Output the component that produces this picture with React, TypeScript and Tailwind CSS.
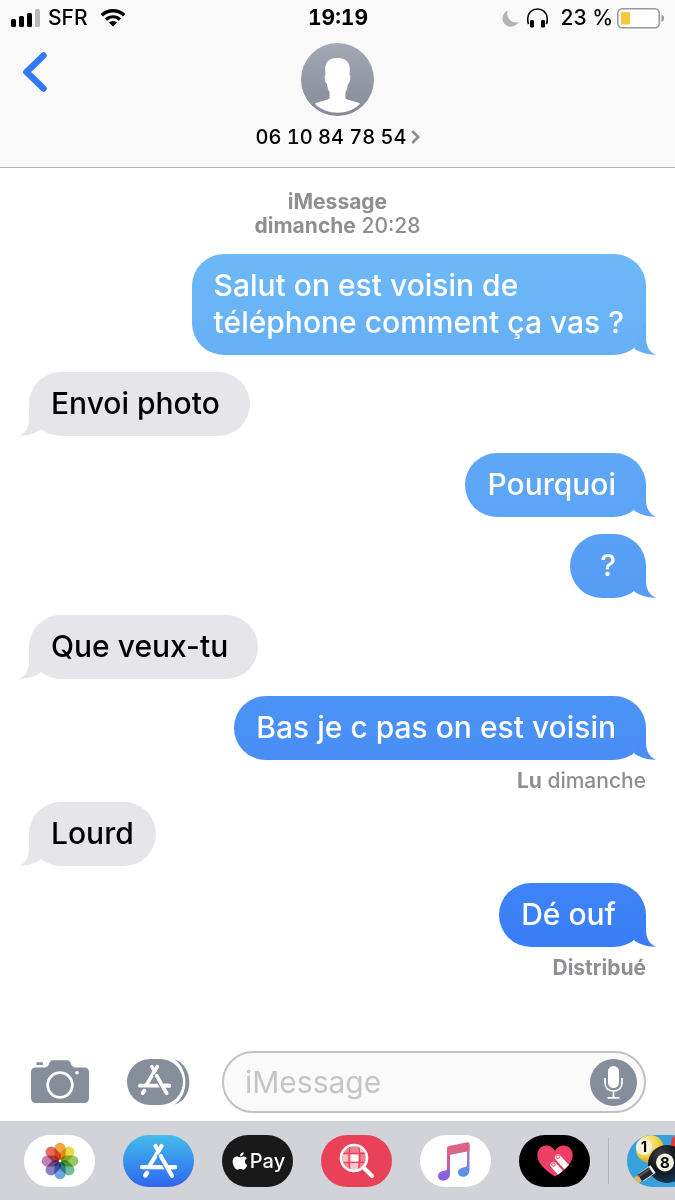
import type { ReactNode } from "react";
import { FaApple } from "react-icons/fa";

type Message = {
  text: string;
  mine: boolean;
  fill: string;
  tail: string;
  status?: ReactNode;
};

const messages: Message[] = [
  {
    text: "Salut on est voisin de\ntéléphone comment ça vas ?",
    mine: true,
    fill: "bg-linear-to-b from-[#6eb9f7] to-[#65aff6] pr-[22px]",
    tail: "text-[#65aff6]"
  },
  { text: "Envoi photo", mine: false, fill: "bg-[#e5e5ea] pr-[30px]", tail: "text-[#e5e5ea]" },
  { text: "Pourquoi", mine: true, fill: "bg-linear-to-b from-[#5fa8f6] to-[#5ba3f6] pr-[30px]", tail: "text-[#5ba3f6]" },
  { text: "?", mine: true, fill: "bg-linear-to-b from-[#59a1f6] to-[#559cf6] pr-[30px]", tail: "text-[#559cf6]" },
  { text: "Que veux-tu", mine: false, fill: "bg-[#e5e5ea] pr-[30px]", tail: "text-[#e5e5ea]" },
  {
    text: "Bas je c pas on est voisin",
    mine: true,
    fill: "bg-linear-to-b from-[#4c93f6] to-[#488ef6] pr-[30px]",
    tail: "text-[#488ef6]",
    status: (
      <>
        <span className="font-bold">Lu</span> dimanche
      </>
    )
  },
  { text: "Lourd", mine: false, fill: "bg-[#e5e5ea] pr-[22px]", tail: "text-[#e5e5ea]" },
  {
    text: "Dé ouf",
    mine: true,
    fill: "bg-linear-to-b from-[#3e84f7] to-[#397df7] pr-[30px]",
    tail: "text-[#397df7]",
    status: <span className="font-bold">Distribué</span>
  }
];

export default function App() {
  return (
    <div className="flex min-h-screen flex-col overflow-x-hidden bg-white font-[Inter,'Liberation_Sans',sans-serif] text-black">
      <header className="border-b border-[#b2b2b2] bg-[#f9f9f9]">
        <StatusBar />
        <ContactBar />
      </header>
      <main className="flex-1 px-[29px] pt-[22px]">
        <p className="mb-4 text-center text-[21px] leading-6 font-medium text-[#8e8e93]">
          <span className="font-bold">iMessage</span>
          <br />
          <span className="font-bold">dimanche</span> 20:28
        </p>
        <ul>
          {messages.map((message) => (
            <Bubble key={message.text} message={message} />
          ))}
        </ul>
      </main>
      <Composer />
      <AppDrawer />
    </div>
  );
}

function StatusBar() {
  return (
    <div className="grid h-9 grid-cols-[1fr_auto_1fr] items-center pr-[10px] pl-[11px] text-[21px] font-medium">
      <div className="flex items-center gap-2">
        <svg className="h-[18px] w-[29px]" viewBox="0 0 29 18" aria-label="Signal">
          <rect x="0" y="10" width="5" height="8" rx="1.5" />
          <rect x="8" y="7" width="5" height="11" rx="1.5" />
          <rect x="16" y="4" width="5" height="14" rx="1.5" />
          <rect x="24" y="0" width="5" height="18" rx="1.5" fill="#b9b9b9" />
        </svg>
        <span>SFR</span>
        <svg className="ml-1 h-[18px] w-[26px]" viewBox="0 0 26 18" fill="none" stroke="#000" aria-label="Wi-Fi">
          <path d="M1.8 6.3A16 16 0 0 1 24.2 6.3" strokeWidth="3.4" />
          <path d="M6 10.6A10 10 0 0 1 20 10.6" strokeWidth="3.2" />
          <path d="M8.9 13.6A6 6 0 0 1 17.1 13.6L13 17.6Z" fill="#000" stroke="none" />
        </svg>
      </div>
      <span className="font-bold tabular-nums">19:19</span>
      <div className="flex items-center justify-end gap-2">
        <svg className="h-[17px] w-[17px]" viewBox="0 0 17 17" aria-label="Ne pas déranger">
          <path d="M6 0.4A8.4 8.4 0 1 0 16.4 12A8.6 8.6 0 0 1 6 0.4Z" fill="#b3b3b3" />
        </svg>
        <svg className="mr-1 h-5 w-[21px]" viewBox="0 0 21 20" aria-label="Casque">
          <path d="M1.6 16C0.4 13.8 0.8 11 0.8 10A9.7 9 0 0 1 20.2 10C20.2 11 20.6 13.8 19.4 16" fill="none" stroke="#000" strokeWidth="1.6" />
          <rect x="3" y="12" width="4" height="7.5" rx="1.2" />
          <rect x="14" y="12" width="4" height="7.5" rx="1.2" />
        </svg>
        <span>23 %</span>
        <svg className="-ml-1 h-[22px] w-12" viewBox="0 0 48 22" aria-label="Batterie">
          <rect x="0.8" y="1.8" width="41.5" height="19" rx="4.5" fill="#fff" stroke="#989898" strokeWidth="1.6" />
          <rect x="4" y="5" width="9" height="12.5" rx="1" fill="#f5c93c" />
          <path d="M44.5 7.5C48 9 48 13.5 44.5 15Z" fill="#989898" />
        </svg>
      </div>
    </div>
  );
}

function ContactBar() {
  return (
    <div className="grid grid-cols-[1fr_auto_1fr] items-start pt-[7px] pb-4">
      <button type="button" aria-label="Retour" className="justify-self-start pt-2 pl-[22px]">
        <svg className="h-[42px] w-[27px]" viewBox="0 0 27 42" fill="none" stroke="#3578f6" strokeWidth="6.6" strokeLinecap="round" strokeLinejoin="round">
          <path d="M21.5 4.5L4.5 21L21.5 37.5" />
        </svg>
      </button>
      <button type="button" className="flex flex-col items-center">
        <svg className="size-[73px]" viewBox="0 0 73 73" aria-hidden="true">
          <defs>
            <linearGradient id="avatar" x1="0" y1="0" x2="0" y2="1">
              <stop offset="0" stopColor="#a3a8b4" />
              <stop offset="1" stopColor="#868a96" />
            </linearGradient>
          </defs>
          <circle cx="36.5" cy="36.5" r="36.5" fill="url(#avatar)" />
          <path
            d="M36.5 15C28 15 23.6 19.5 24.2 27.5L24.6 32C23.4 32 23.4 34 23.9 36.5C24.3 39 25 40.6 26 40.8C26.4 44.5 27 47 28.6 49.3V55.5C25 58 18 58 13.8 60.8C20 67 28 69.8 36.5 69.8S53 67 59.2 60.8C55 58 48 58 44.4 55.5V49.3C46 47 46.6 44.5 47 40.8C48 40.6 48.7 39 49.1 36.5C49.6 34 49.6 32 48.4 32L48.8 27.5C49.4 19.5 45 15 36.5 15Z"
            fill="#fff"
          />
        </svg>
        <span className="mt-[7px] flex items-center gap-1 text-xl leading-7 font-medium tabular-nums">
          06 10 84 78 54
          <svg className="h-[14px] w-[9px]" viewBox="0 0 9 14" fill="none" stroke="#8e8e93" strokeWidth="2.6">
            <path d="M1.2 1L7.2 7L1.2 13" />
          </svg>
        </span>
      </button>
    </div>
  );
}

function Bubble({ message }: { message: Message }) {
  const { text, mine, fill, tail, status } = message;
  return (
    <li className={`flex flex-col ${mine ? "items-end" : "items-start"} ${status ? "" : "mb-[17px]"}`}>
      <div
        className={`relative flex min-w-[76px] rounded-[32px] pt-[13px] pb-[14px] pl-[22px] ${fill} ${mine ? "justify-end text-white" : "text-black"}`}
      >
        <svg
          className={`absolute bottom-0 h-8 w-6 ${tail} ${mine ? "-right-[10px]" : "-left-[10px] -scale-x-100"}`}
          viewBox="0 0 24 32"
          fill="currentColor"
          aria-hidden="true"
        >
          <path d="M14 0V14C14 23 17 29 24 31.6C16 32 8 29.5 2 25.2L6 18L12 0Z" />
        </svg>
        <p className="relative text-[30px] leading-[37px] font-medium whitespace-pre-line">{text}</p>
      </div>
      {status && <p className="text-[21px] leading-[42px] font-medium text-[#8e8e93]">{status}</p>}
    </li>
  );
}

function Composer() {
  return (
    <form className="flex items-center gap-7 pt-4 pr-[29px] pb-2 pl-6">
      <button type="button" aria-label="Appareil photo" className="flex w-[71px] shrink-0 justify-center">
        <svg className="h-11 w-[58px]" viewBox="0 0 58 44" fill="#868e9b">
          <rect x="5.5" y="2.3" width="6.5" height="2.8" rx="0.6" />
          <path d="M5 7.5H13C17 7.5 17.5 5 18.3 3C19.2 0.7 20.5 0.2 22.5 0.2H35.5C37.5 0.2 38.8 0.7 39.7 3C40.5 5 41 7.5 45 7.5H53Q58 7.5 58 12.5V38Q58 43 53 43H5Q0 43 0 38V12.5Q0 7.5 5 7.5Z" />
          <circle cx="29" cy="25" r="12.3" fill="none" stroke="#fff" strokeWidth="2.8" />
          <circle cx="46" cy="12.7" r="1.8" fill="#fff" />
        </svg>
      </button>
      <button type="button" aria-label="Applications" className="flex w-[71px] shrink-0 justify-center">
        <svg className="h-12 w-[63px]" viewBox="0 0 63 48">
          <rect x="0" y="1" width="56" height="46" rx="23" fill="#868e9b" />
          <path d="M47.5 1.5C67 7 67.5 41 47.5 46.5C62 37 62 11 47.5 1.5Z" fill="#868e9b" />
          <g transform="translate(-4 -1) scale(0.89)">
            <StoreGlyph gap="#868e9b" />
          </g>
        </svg>
      </button>
      <div className="flex min-w-0 flex-1 items-center rounded-full border-2 border-[#c0c0c5] bg-[#fafafa] py-[5px] pr-[7px] pl-[21px]">
        <input
          type="text"
          aria-label="iMessage"
          placeholder="iMessage"
          className="min-w-0 flex-1 bg-transparent text-[30px] leading-[48px] outline-none placeholder:text-[#c5c5c9]"
        />
        <button type="button" aria-label="Dicter" className="shrink-0">
          <svg className="size-[47px]" viewBox="0 0 47 47">
            <circle cx="23.5" cy="23.5" r="23.5" fill="#868e9b" />
            <rect x="18" y="7" width="11" height="22" rx="5.5" fill="#fff" />
            <path d="M15 19V23.5C15 29 18.5 32 23.5 32S32 29 32 23.5V19M23.5 32V38.5M17.5 38.8H29.5" fill="none" stroke="#fff" strokeWidth="1.7" />
          </svg>
        </button>
      </div>
    </form>
  );
}

// The three crossed sticks of the store logo, on a 71x52 area
function StoreGlyph({ gap }: { gap: string }) {
  return (
    <g fill="none" stroke="#fff" strokeWidth="4.2" strokeLinecap="round">
      <path d="M38.5 11L26.5 31" />
      <path d="M19 32.2H52" />
      <path d="M24 38L22.3 40.3" strokeWidth="4.6" />
      <path d="M36.6 19L48.8 41" stroke={gap} strokeWidth="6.5" strokeLinecap="butt" />
      <path d="M32.5 11L35.5 16M37.8 21L49 40.8M45 32.2H52" />
    </g>
  );
}

function AppDrawer() {
  return (
    <nav aria-label="Apps iMessage" className="flex h-[79px] items-center gap-7 overflow-hidden bg-[#d1d3d8] pl-6">
      <DrawerButton label="Photos" className="bg-white">
        <PhotosIcon />
      </DrawerButton>
      <DrawerButton label="Store" className="bg-linear-to-b from-[#48bbea] to-[#3264ee]">
        <svg className="h-[52px] w-[71px]" viewBox="0 0 71 52">
          <StoreGlyph gap="#3b88ed" />
        </svg>
      </DrawerButton>
      <DrawerButton label="Apple Pay" className="bg-[#191919] text-xl font-medium text-white">
        <FaApple className="size-5" />
        <span>Pay</span>
      </DrawerButton>
      <DrawerButton label="Images" className="bg-[#e94158]">
        <SearchIcon />
      </DrawerButton>
      <DrawerButton label="Musique" className="bg-white">
        <MusicIcon />
      </DrawerButton>
      <DrawerButton label="Digital Touch" className="bg-black">
        <TouchIcon />
      </DrawerButton>
      <div className="-mx-[10px] h-[46px] w-px shrink-0 bg-[#b3b5ba]" />
      <DrawerButton label="8 Ball Pool" className="bg-[#35a1dd]">
        <PoolIcon />
      </DrawerButton>
    </nav>
  );
}

function DrawerButton({ label, className, children }: { label: string; className: string; children: ReactNode }) {
  return (
    <button
      type="button"
      aria-label={label}
      className={`flex h-[52px] w-[71px] shrink-0 items-center justify-center overflow-hidden rounded-full ${className}`}
    >
      {children}
    </button>
  );
}

function PhotosIcon() {
  const petals = ["#f29a2e", "#e6d532", "#8cc152", "#62b58a", "#5b9be0", "#7d72b8", "#bd6fae", "#e65a4d"];
  return (
    <svg className="size-[38px]" viewBox="-19 -19 38 38">
      {petals.map((color, index) => (
        <rect
          key={color}
          x="-5.6"
          y="-18.2"
          width="11.2"
          height="17.4"
          rx="5.6"
          fill={color}
          opacity="0.9"
          transform={`rotate(${index * 45})`}
          className="mix-blend-multiply"
        />
      ))}
      <circle r="1.2" fill="#fff" />
    </svg>
  );
}

function SearchIcon() {
  return (
    <svg className="size-9" viewBox="0 0 36 36">
      <circle cx="15" cy="15" r="12" fill="#f1818e" />
      <path d="M11 10.5H19.5V19H11ZM4 11H10V19H4ZM11 20H19V27H11ZM20.5 4.5L25 9H20.5Z" fill="#f9c5ca" />
      <path d="M12.5 11.5H19V18.5H12.5Z" fill="#fff" />
      <path d="M3 10.5H27M3 19.3H27M11 3C9.5 11 9.5 19 11 27M19.8 3C21.3 11 21.3 19 19.8 27" stroke="#e94158" strokeWidth="1.3" fill="none" />
      <circle cx="15" cy="15" r="13" stroke="#fff" strokeWidth="2.6" fill="none" />
      <path d="M24.5 24.5L33 33" stroke="#fff" strokeWidth="4" strokeLinecap="round" />
    </svg>
  );
}

function MusicIcon() {
  return (
    <svg className="h-10 w-9" viewBox="2 0 36 40">
      <defs>
        <linearGradient id="stemLeft" x1="0" y1="0" x2="0" y2="1">
          <stop offset="0" stopColor="#ee5367" />
          <stop offset="0.6" stopColor="#b163c4" />
          <stop offset="1" stopColor="#765df5" />
        </linearGradient>
        <linearGradient id="stemRight" x1="0" y1="0" x2="0" y2="1">
          <stop offset="0" stopColor="#d7698f" />
          <stop offset="0.5" stopColor="#8b82d8" />
          <stop offset="1" stopColor="#4b93ee" />
        </linearGradient>
      </defs>
      <path d="M11 7.5H14V33C14 37 11 39.5 7.5 39.5C4 39.5 2 37.5 2 35C2 32 4 30.5 8 29.8C10.3 29.4 11 29 11 27Z" fill="url(#stemLeft)" />
      <path d="M31 3.5H33.5V29C33.5 33 30.5 35.8 27.5 35.8C24 35.8 22 33.8 22 31.3C22 28.3 24 26.8 28 26.2C30.3 25.8 31 25.4 31 23.5Z" fill="url(#stemRight)" />
      <path d="M11 7.5C11 6 11.5 5.3 13 5L31.5 1.3C33 1 33.5 1.5 33.5 3V10L11 14.5Z" fill="#dc6484" />
    </svg>
  );
}

function TouchIcon() {
  return (
    <svg className="h-8 w-9" viewBox="0 0 36 32">
      <defs>
        <clipPath id="heart">
          <path d="M18 31.5C11 27.5 0.3 19 0.3 10.3C0.3 4.5 4.3 0.5 9.3 0.5C13.5 0.5 16.7 3 18 6C19.3 3 22.5 0.5 26.7 0.5C31.7 0.5 35.7 4.5 35.7 10.3C35.7 19 25 27.5 18 31.5Z" />
        </clipPath>
      </defs>
      <g clipPath="url(#heart)">
        <rect width="36" height="32" fill="#ec3e66" />
        <g stroke="#fff" strokeWidth="6.2" strokeLinecap="round">
          <path d="M21 12.5L34 27" />
          <path d="M16.5 20L27 32" />
        </g>
        <g fill="#fff" stroke="#ef7d8e" strokeWidth="1.4">
          <circle cx="21" cy="11.8" r="1.7" />
          <circle cx="16.5" cy="19.5" r="1.7" />
        </g>
      </g>
    </svg>
  );
}

function PoolIcon() {
  return (
    <svg className="h-[52px] w-[71px]" viewBox="0 0 71 52">
      <defs>
        <radialGradient id="yellowBall" cx="0.35" cy="0.3" r="0.8">
          <stop offset="0" stopColor="#fff3b0" />
          <stop offset="0.6" stopColor="#f0cf42" />
          <stop offset="1" stopColor="#b18b20" />
        </radialGradient>
        <radialGradient id="blackBall" cx="0.35" cy="0.25" r="0.8">
          <stop offset="0" stopColor="#3d4147" />
          <stop offset="0.5" stopColor="#101216" />
          <stop offset="1" stopColor="#17395a" />
        </radialGradient>
      </defs>
      <circle cx="52" cy="8" r="8" fill="#e63b35" />
      <circle cx="23" cy="14" r="14" fill="url(#yellowBall)" />
      <circle cx="17" cy="12" r="8" fill="#f6f2dc" />
      <text x="17" y="17" textAnchor="middle" fontSize="14" fontWeight="700" fontFamily="Inter, sans-serif">
        1
      </text>
      <circle cx="40" cy="29" r="19" fill="url(#blackBall)" />
      <circle cx="38" cy="27.5" r="9" fill="#f5f3e1" />
      <text x="38" y="33" textAnchor="middle" fontSize="15" fontWeight="700" fontFamily="Inter, sans-serif">
        8
      </text>
      <path d="M26 34L14 42.5" stroke="#e9eef2" strokeWidth="9" />
      <path d="M24 35.5L12 43.5" stroke="#26272b" strokeWidth="8" />
      <path d="M13 43L8.5 46" stroke="#e8b565" strokeWidth="7" />
      <path d="M22.5 34L11.5 41.5" stroke="#5b5d62" strokeWidth="1.6" />
    </svg>
  );
}
